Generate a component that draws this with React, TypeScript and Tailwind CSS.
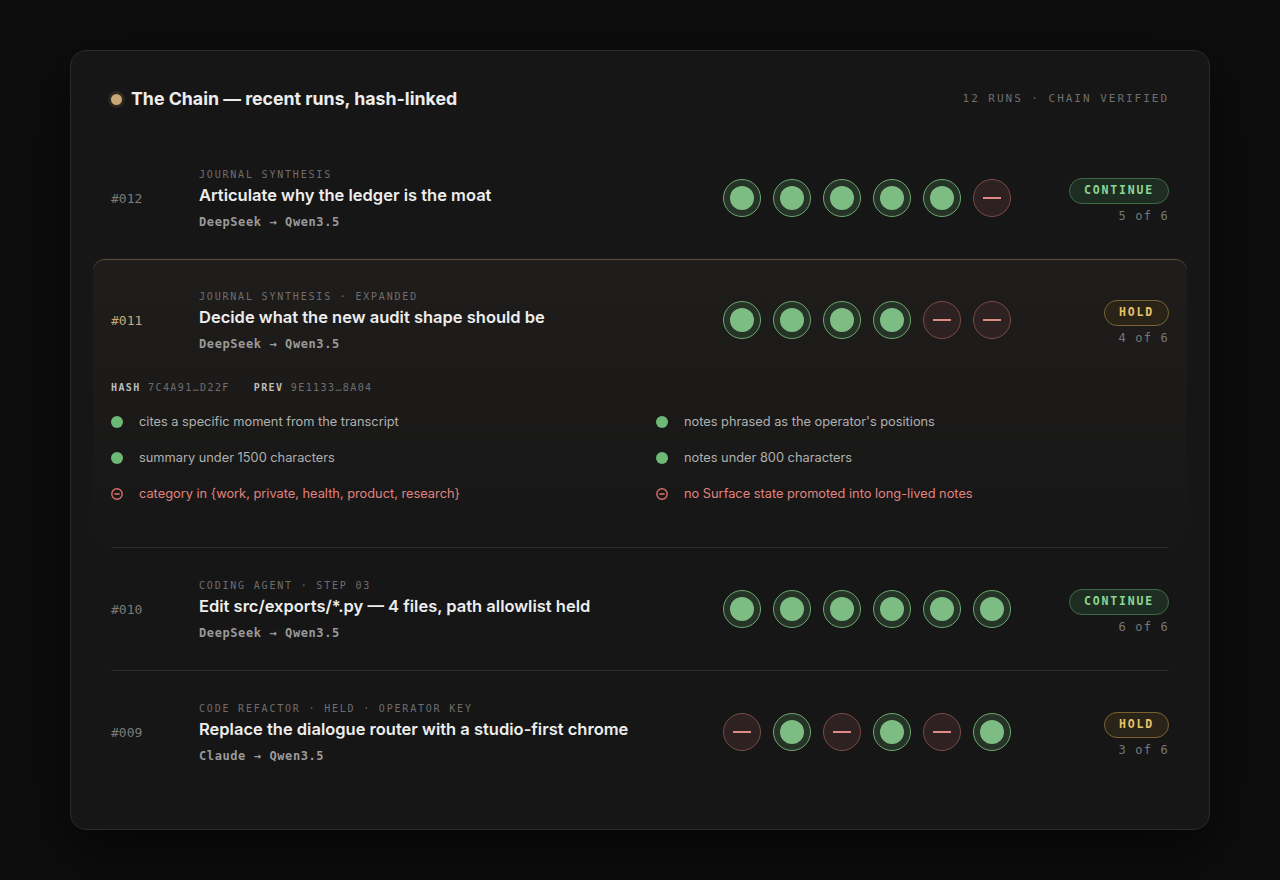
import React from 'react';

type Step = 'pass' | 'fail';

interface Run {
  id: string;
  label: string;
  title: string;
  route: string;
  steps: Step[];
  verdict: 'CONTINUE' | 'HOLD';
  expanded?: boolean;
}

const mono = "font-['DejaVu_Sans_Mono','Liberation_Mono',monospace]";
const sans = "font-['Inter','Noto_Sans',sans-serif]";

const runs: Run[] = [
  {
    id: '#012',
    label: 'JOURNAL SYNTHESIS',
    title: 'Articulate why the ledger is the moat',
    route: 'DeepSeek → Qwen3.5',
    steps: ['pass', 'pass', 'pass', 'pass', 'pass', 'fail'],
    verdict: 'CONTINUE',
  },
  {
    id: '#011',
    label: 'JOURNAL SYNTHESIS · EXPANDED',
    title: 'Decide what the new audit shape should be',
    route: 'DeepSeek → Qwen3.5',
    steps: ['pass', 'pass', 'pass', 'pass', 'fail', 'fail'],
    verdict: 'HOLD',
    expanded: true,
  },
  {
    id: '#010',
    label: 'CODING AGENT · STEP 03',
    title: 'Edit src/exports/*.py — 4 files, path allowlist held',
    route: 'DeepSeek → Qwen3.5',
    steps: ['pass', 'pass', 'pass', 'pass', 'pass', 'pass'],
    verdict: 'CONTINUE',
  },
  {
    id: '#009',
    label: 'CODE REFACTOR · HELD · OPERATOR KEY',
    title: 'Replace the dialogue router with a studio-first chrome',
    route: 'Claude → Qwen3.5',
    steps: ['fail', 'pass', 'fail', 'pass', 'fail', 'pass'],
    verdict: 'HOLD',
  },
];

const checks: { text: string; ok: boolean }[] = [
  { text: 'cites a specific moment from the transcript', ok: true },
  { text: "notes phrased as the operator's positions", ok: true },
  { text: 'summary under 1500 characters', ok: true },
  { text: 'notes under 800 characters', ok: true },
  { text: 'category in {work, private, health, product, research}', ok: false },
  { text: 'no Surface state promoted into long-lived notes', ok: false },
];

const StepDot = ({ step }: { step: Step }) =>
  step === 'pass' ? (
    <div className="w-[38px] h-[38px] rounded-full border border-[#6aa86f] bg-[#263428] flex items-center justify-center">
      <div className="w-[24px] h-[24px] rounded-full bg-[#7dbd83]" />
    </div>
  ) : (
    <div className="w-[38px] h-[38px] rounded-full border border-[#7a4a48] bg-[#2d2221] flex items-center justify-center">
      <div className="w-[18px] h-[2px] bg-[#e08a85]" />
    </div>
  );

const RunRow = ({ run }: { run: Run }) => {
  const cont = run.verdict === 'CONTINUE';
  const passed = run.steps.filter((s) => s === 'pass').length;
  return (
    <div className="flex items-center">
      <div className={`${mono} w-[88px] mt-[2px] text-[13px] ${run.expanded ? 'text-[#c8a774]' : 'text-[#7a7a7a]'}`}>
        {run.id}
      </div>
      <div className="flex-1 min-w-0 mt-[4px]">
        <div className={`${mono} text-[10px] leading-[14px] tracking-[0.18em] text-[#6e6e6e]`}>{run.label}</div>
        <div className={`${sans} mt-[1px] text-[16.5px] leading-[24px] font-semibold text-[#ededed]`}>{run.title}</div>
        <div className={`${mono} mt-[5px] text-[12px] leading-[20px] font-bold tracking-[0.05em] text-[#9a9a9a]`}>
          {run.route}
        </div>
      </div>
      <div className="flex gap-3">
        {run.steps.map((s, i) => (
          <StepDot key={i} step={s} />
        ))}
      </div>
      <div className="w-[158px] mt-[6px] flex flex-col items-end">
        <div
          className={`${mono} h-[26px] px-[14px] rounded-full border flex items-center text-[11.5px] font-bold tracking-[0.16em] ${
            cont
              ? 'border-[#3f6a45] bg-[#1e2d21] text-[#8fd695]'
              : 'border-[#7a6330] bg-[#2a2418] text-[#e8c36a]'
          }`}
        >
          {run.verdict}
        </div>
        <div className={`${mono} mt-[4px] text-[12px] leading-[16px] tracking-[0.1em] text-[#777]`}>
          {passed} of {run.steps.length}
        </div>
      </div>
    </div>
  );
};

const CheckIcon = ({ ok }: { ok: boolean }) =>
  ok ? (
    <div className="w-[12px] h-[12px] rounded-full bg-[#6cb877]" />
  ) : (
    <svg width="12" height="12" viewBox="0 0 12 12">
      <circle cx="6" cy="6" r="5.2" fill="none" stroke="#d9706c" strokeWidth="1.4" />
      <line x1="3.4" y1="6" x2="8.6" y2="6" stroke="#d9706c" strokeWidth="1.6" />
    </svg>
  );

export default function App() {
  return (
    <div className="min-h-screen bg-[#0d0d0d] pt-[50px] px-[70px]">
      <div className="h-[780px] rounded-2xl border border-[#2a2a2a] bg-[#161616] px-10 pt-[37px] shadow-[0_20px_60px_rgba(0,0,0,0.6)]">
        {/* Header */}
        <div className="flex items-center justify-between h-[22px]">
          <div className="flex items-center gap-[9px]">
            <div className="w-[11px] h-[11px] rounded-full bg-[#c8a774] ring-[3px] ring-[#2a2620]" />
            <h1 className={`${sans} text-[17.75px] font-bold text-[#ededed]`}>The Chain — recent runs, hash-linked</h1>
          </div>
          <div className={`${mono} text-[11px] tracking-[0.18em] text-[#6e6e6e]`}>12 RUNS · CHAIN VERIFIED</div>
        </div>

        <div className="mt-[27px]">
          {runs.map((run, i) =>
            run.expanded ? (
              <div
                key={run.id}
                className="-mx-[18px] px-[18px] rounded-t-xl border-t border-t-[#5a4f3e] bg-gradient-to-b from-[#1e1d1b] via-[#1b1a19] to-[#161616] pt-[26px] pb-[43px]"
              >
                <RunRow run={run} />
                <div className={`${mono} mt-[26px] text-[10px] tracking-[0.14em] flex gap-[24px]`}>
                  <span>
                    <span className="font-bold text-[#bdbdbd]">HASH</span>{' '}
                    <span className="text-[#6e6e6e]">7C4A91…D22F</span>
                  </span>
                  <span>
                    <span className="font-bold text-[#bdbdbd]">PREV</span>{' '}
                    <span className="text-[#6e6e6e]">9E1133…8A04</span>
                  </span>
                </div>
                <div className="mt-[17px] grid grid-cols-2 gap-x-8 gap-y-[16px]">
                  {checks.map((c) => (
                    <div key={c.text} className="flex items-center gap-[16px] h-[20px]">
                      <CheckIcon ok={c.ok} />
                      <span className={`${sans} text-[12.8px] ${c.ok ? 'text-[#b0b0b0]' : 'text-[#e0837f]'}`}>
                        {c.text}
                      </span>
                    </div>
                  ))}
                </div>
              </div>
            ) : (
              <div
                key={run.id}
                className={`pt-[27px] pb-[27px] ${i > 0 ? 'border-t border-[#2a2a2a]' : ''}`}
              >
                <RunRow run={run} />
              </div>
            ),
          )}
        </div>
      </div>
    </div>
  );
}
